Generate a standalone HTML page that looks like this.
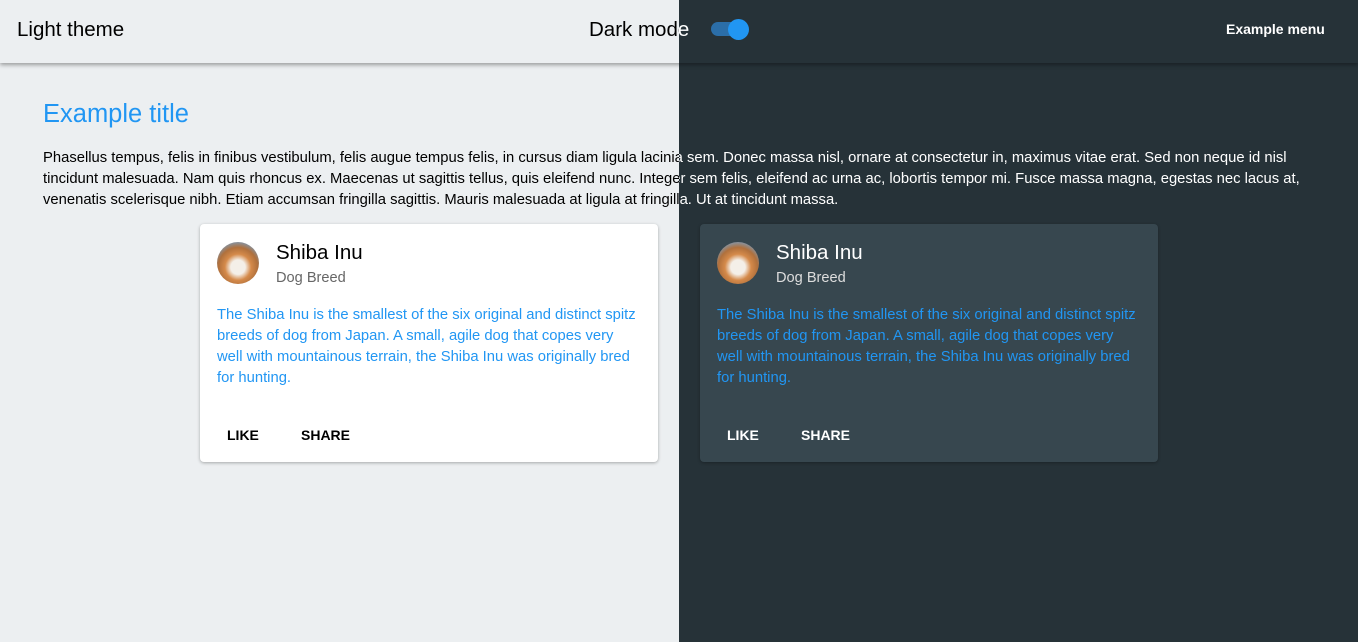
<!DOCTYPE html>
<html><head><meta charset="utf-8"><style>
*{margin:0;padding:0;box-sizing:border-box}
html,body{width:1358px;height:642px;overflow:hidden;font-family:"Liberation Sans",Arial,sans-serif}
.layer{position:absolute;left:0;top:0;width:1358px;height:642px}
.light{background:#eceff1;color:#000}
.dark{background:#263238;color:#fff;clip-path:inset(0 0 0 679px)}
.hdr{position:absolute;left:0;top:0;width:1358px;height:63px;box-shadow:0 2px 4px rgba(0,0,0,.35)}
.light .hdr{background:#eceff1}
.dark .hdr{background:#263238}
.t1{position:absolute;left:17px;top:18px;font-size:20.5px}
.t2{position:absolute;left:589px;top:18px;font-size:20.5px}
.menu{position:absolute;left:1226px;top:21px;font-size:14px;font-weight:bold}
.track{position:absolute;left:711px;top:22px;width:34px;height:14px;border-radius:7px;background:#2b6ea8}
.thumb{position:absolute;left:728px;top:19px;width:21px;height:21px;border-radius:50%;background:#2196f3}
.title{position:absolute;left:43px;top:100px;font-size:25.5px;color:#2196f3}
.para{position:absolute;left:43px;top:148px;width:1290px;font-size:14.8px;line-height:21px}
.card{position:absolute;top:224px;width:458px;height:238px;border-radius:4px;box-shadow:0 1px 3px rgba(0,0,0,.3)}
.light .card{background:#fff}
.dark .card{background:#37474f}
.av{position:absolute;left:17px;top:18px;width:42px;height:42px;border-radius:50%;background:radial-gradient(circle at 50% 60%,#f4efe8 0 22%,#d58a4a 40%,#b0703c 60%,#8a8f96 75%)}
.nm{position:absolute;left:76px;top:17px;font-size:20.5px}
.sub{position:absolute;left:76px;top:46px;font-size:14.6px}
.light .sub{color:#666}
.dark .sub{color:#ddd}
.bd{position:absolute;left:17px;top:81px;white-space:nowrap;font-size:14.8px;line-height:21px;color:#2196f3}
.b1{position:absolute;left:27px;top:203px;font-size:14px;font-weight:bold}
.b2{position:absolute;left:101px;top:203px;font-size:14px;font-weight:bold}
</style></head><body>
<div class="layer light">
 <div class="hdr"><div class="t1">Light theme</div><div class="t2">Dark mode</div><div class="menu">Example menu</div><div class="track"></div><div class="thumb"></div></div>
 <div class="title">Example title</div>
 <div class="para">Phasellus tempus, felis in finibus vestibulum, felis augue tempus felis, in cursus diam ligula lacinia sem. Donec massa nisl, ornare at consectetur in, maximus vitae erat. Sed non neque id nisl tincidunt malesuada. Nam quis rhoncus ex. Maecenas ut sagittis tellus, quis eleifend nunc. Integer sem felis, eleifend ac urna ac, lobortis tempor mi. Fusce massa magna, egestas nec lacus at, venenatis scelerisque nibh. Etiam accumsan fringilla sagittis. Mauris malesuada at ligula at fringilla. Ut at tincidunt massa.</div>
 <div class="card" style="left:200px"><div class="av"></div><div class="nm">Shiba Inu</div><div class="sub">Dog Breed</div><div class="bd">The Shiba Inu is the smallest of the six original and distinct spitz<br>breeds of dog from Japan. A small, agile dog that copes very<br>well with mountainous terrain, the Shiba Inu was originally bred<br>for hunting.</div><div class="b1">LIKE</div><div class="b2">SHARE</div></div>
</div>
<div class="layer dark">
 <div class="hdr"><div class="t1">Light theme</div><div class="t2">Dark mode</div><div class="menu">Example menu</div><div class="track"></div><div class="thumb"></div></div>
 <div class="title">Example title</div>
 <div class="para">Phasellus tempus, felis in finibus vestibulum, felis augue tempus felis, in cursus diam ligula lacinia sem. Donec massa nisl, ornare at consectetur in, maximus vitae erat. Sed non neque id nisl tincidunt malesuada. Nam quis rhoncus ex. Maecenas ut sagittis tellus, quis eleifend nunc. Integer sem felis, eleifend ac urna ac, lobortis tempor mi. Fusce massa magna, egestas nec lacus at, venenatis scelerisque nibh. Etiam accumsan fringilla sagittis. Mauris malesuada at ligula at fringilla. Ut at tincidunt massa.</div>
 <div class="card" style="left:700px"><div class="av"></div><div class="nm">Shiba Inu</div><div class="sub">Dog Breed</div><div class="bd">The Shiba Inu is the smallest of the six original and distinct spitz<br>breeds of dog from Japan. A small, agile dog that copes very<br>well with mountainous terrain, the Shiba Inu was originally bred<br>for hunting.</div><div class="b1">LIKE</div><div class="b2">SHARE</div></div>
</div>
</body></html>
